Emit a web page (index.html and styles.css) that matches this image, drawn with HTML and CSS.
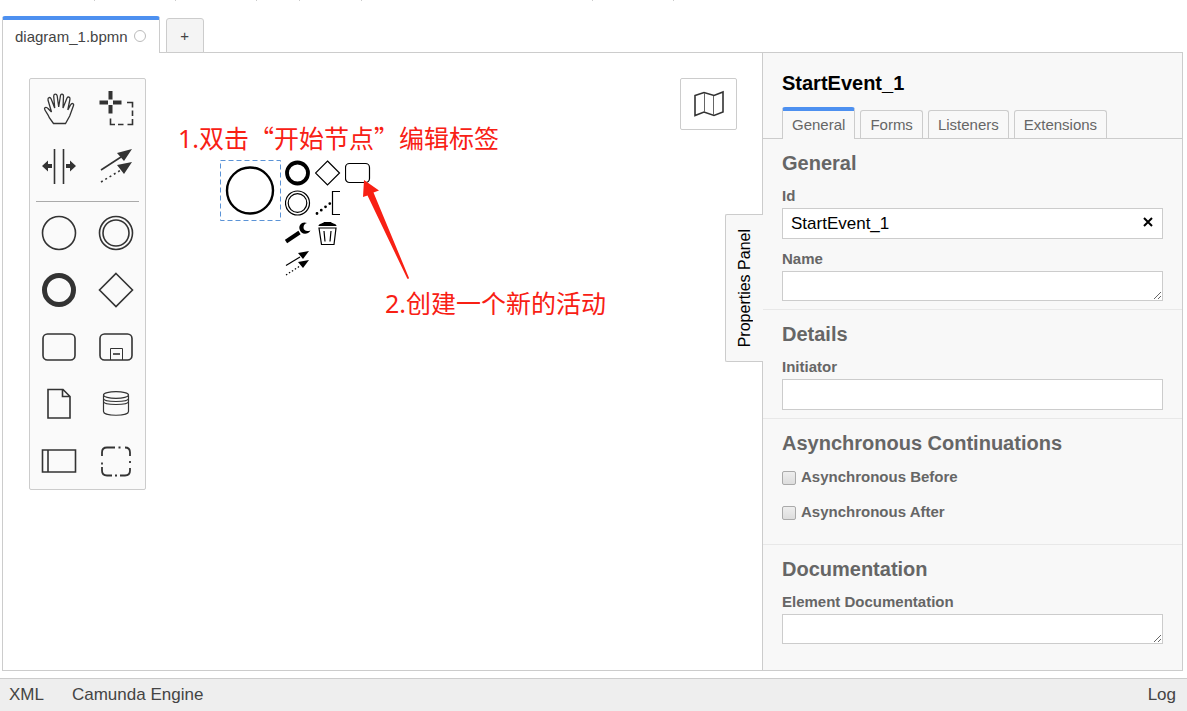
FILE: index.html
```html
<!DOCTYPE html>
<html lang="en">
<head>
<meta charset="utf-8">
<title>diagram_1.bpmn</title>
<link rel="stylesheet" href="styles.css">
</head>
<body>
<div class="toolbar"><span class="s1"></span><span class="s2"></span><span class="s2"></span><span class="s3"></span><span class="s4"></span><span class="s5"></span><span class="s2"></span></div>
<nav class="file-tabs">
  <button class="file-tab active">diagram_1.bpmn <span class="dot"></span></button>
  <button class="file-tab add" aria-label="New tab">+</button>
</nav>
<main class="editor">
  <section class="canvas">
    <div class="palette">
      <div class="tools">
        <button aria-label="Hand tool"><svg width="38" height="38" viewBox="0 0 38 38"><path stroke-width="1.300" d="M13.500 34.500L9.500 29C8 25 4.500 21.500 4.500 19.500C4.700 17.800 7 18 8 19.500L11.500 23L8 11C7.700 8.300 10 7.500 11.200 10L14.700 19L13.700 7C14 4.500 16.700 4.500 17.200 7L18.700 18L20.500 6.500C21 4.300 23.500 4.800 23.500 7L23 19L27 9C28.200 7 30.500 8.300 29.900 10.500L27.800 21L30.500 16C32 13.500 34.200 14.500 33.500 16.500L29.700 27L25.500 34.500Z"/></svg></button>
        <button aria-label="Lasso tool"><svg width="38" height="38" viewBox="0 0 38 38"><path stroke-width="4" d="M13.500 2v8.500M13.500 16v8.500M2.500 13.500h8.500M16 13.500h8.500"/><path d="M30 13.500h5.500v5M35.500 21.500v5.500M35.500 30v5.500h-5M26.500 35.500h-5.500M18 35.500h-4.500v-6"/></svg></button>
        <button aria-label="Space tool"><svg width="38" height="38" viewBox="0 0 38 38"><path d="M14.500 2v35M23.500 2v35"/><path class="solid" d="M2 19l6-5.500v3.500h4v4H8v3.500zM36 19l-6-5.500v3.500h-4v4h4v3.500z"/></svg></button>
        <button aria-label="Connect tool"><svg width="38" height="38" viewBox="0 0 38 38"><path d="M4 23L24 10"/><path stroke-dasharray="2 3" d="M4 35L24 23"/><path class="solid" d="M35 2l-8 12-7-8zM35 15l-8 12-7-9z"/></svg></button>
      </div>
      <hr>
      <div class="shapes">
        <button aria-label="Start event"><svg width="38" height="38" viewBox="0 0 38 38"><circle cx="19" cy="19" r="16.500"/></svg></button>
        <button aria-label="Intermediate event"><svg width="38" height="38" viewBox="0 0 38 38"><circle cx="19" cy="19" r="16.500"/><circle cx="19" cy="19" r="13"/></svg></button>
        <button aria-label="End event"><svg width="38" height="38" viewBox="0 0 38 38"><circle cx="19" cy="19" r="14.500" stroke-width="5"/></svg></button>
        <button aria-label="Gateway"><svg width="38" height="38" viewBox="0 0 38 38"><path d="M19 2.500L35.500 19L19 35.500L2.500 19Z"/></svg></button>
        <button aria-label="Task"><svg width="38" height="38" viewBox="0 0 38 38"><rect x="3" y="6" width="32" height="26" rx="4.500"/></svg></button>
        <button aria-label="Sub process"><svg width="38" height="38" viewBox="0 0 38 38"><rect x="3" y="6" width="32" height="26" rx="4.500"/><path stroke-width="1" d="M13.500 32V20.500h12V32"/><path d="M16 26h7"/></svg></button>
        <button aria-label="Data object"><svg width="38" height="38" viewBox="0 0 38 38"><path d="M8 4.500h15l7 7v21.500H8zM22.500 4.500v7h7.500"/></svg></button>
        <button aria-label="Data store"><svg width="38" height="38" viewBox="0 0 38 38"><path stroke-width="1.200" d="M6.500 10.500v16c0 5 25 5 25 0v-16M6.500 13.500c0 4 25 4 25 0M6.500 16.500c0 4 25 4 25 0"/><ellipse stroke-width="1.200" cx="19" cy="10" rx="12.500" ry="3.300"/></svg></button>
        <button aria-label="Participant"><svg width="38" height="38" viewBox="0 0 38 38"><path d="M2.500 8h33v22h-33zM8 8v22"/></svg></button>
        <button aria-label="Group"><svg width="38" height="38" viewBox="0 0 38 38"><path stroke-width="1.800" d="M5 14V10.500q0-5 5-5h8M28 5.500q5 0 5 5V14M33 26v2.500q0 5-5 5h-5M15 33.500h-5q-5 0-5-5V25M21.500 5.500h2M33 19v2M18 33.500h2M5 20.500v2"/></svg></button>
      </div>
    </div>

    <svg class="start-event" width="62" height="62" viewBox="0 0 62 62"><rect x="0.500" y="0.500" width="60" height="60"/><circle cx="30" cy="30.500" r="23"/></svg>

    <div class="context-pad">
      <button aria-label="Append end event"><svg width="26" height="26" viewBox="0 0 26 26"><circle cx="12.500" cy="13" r="10.500" stroke-width="3.800"/></svg></button>
      <button aria-label="Append gateway"><svg width="26" height="26" viewBox="0 0 26 26"><path d="M12.500 1L24.500 13L12.500 25L.5 13Z"/></svg></button>
      <button aria-label="Append task"><svg width="26" height="26" viewBox="0 0 26 26"><rect x=".5" y="3.500" width="24" height="19" rx="4"/></svg></button>
      <button aria-label="Append intermediate event"><svg width="26" height="26" viewBox="0 0 26 26"><circle cx="12.500" cy="13" r="12"/><circle cx="12.500" cy="13" r="9.300"/></svg></button>
      <button aria-label="Append text annotation"><svg width="26" height="26" viewBox="0 0 26 26"><path d="M25 1.500h-7.500v23h7.500"/><path d="M2 23.500L15.500 13" stroke-width="2.800" stroke-linecap="round" stroke-dasharray="0 5.400"/></svg></button>
      <span></span>
      <button aria-label="Change type"><svg width="26" height="26" viewBox="0 0 26 26"><path stroke-width="4" d="M1 21.500L14.500 12.500"/><path class="solid" d="M22 3C17.500 1 13.500 4.500 14.500 9C15.500 14.500 22.500 15.500 25.500 10.500C21.500 12 18.500 10.500 18.500 7.500C18.500 5 20 3.500 22 3Z"/></svg></button>
      <button aria-label="Remove"><svg width="26" height="26" viewBox="0 0 26 26"><path class="solid" d="M3.500 6c0-2.500 4-2 5.500-4h7c1.500 2 5.500 1.500 5.500 4z"/><path d="M4 8h17l-2 16.500H6.500zM9 11l1 10.500M16 11l-1 10.500"/></svg></button>
      <span></span>
      <button aria-label="Connect"><svg width="26" height="26" viewBox="0 0 26 26"><path d="M1 15.500L15 7"/><path stroke-dasharray="1.500 2" d="M1 25L15 16"/><path class="solid" d="M24 1l-6 8-5-6zM24 10l-6 8-5-6z"/></svg></button>
    </div>

    <p class="note note-one" lang="zh-CN"><span class="num">1.</span>双击“开始节点”编辑标签</p>
    <p class="note note-two" lang="zh-CN"><span class="num">2.</span>创建一个新的活动</p>
    <svg class="arrow" width="50" height="102" viewBox="0 0 50 102"><path d="M1 1L16 11.500L10.500 13.500L46 99Q45 101 44 99L4.500 16.500L0 18Z"/></svg>

    <button class="minimap" aria-label="Open minimap"><svg width="32" height="28" viewBox="0 0 32 28"><path d="M2 5.500L11 2.500L21 5.500L30 2V22L21 25.500L11 22L2 25.500Z"/><path class="fold" d="M11.500 3v19M20.500 6v19"/></svg></button>
  </section>

  <aside class="panel">
    <button class="panel-toggle"><span>Properties Panel</span></button>
    <h1>StartEvent_1</h1>
    <nav class="tabs">
      <a href="#general" class="active">General</a>
      <a href="#forms">Forms</a>
      <a href="#listeners">Listeners</a>
      <a href="#extensions">Extensions</a>
    </nav>
    <section class="group" id="general">
      <h2>General</h2>
      <div class="field"><label for="id">Id</label><div class="clearable"><input id="id" type="text" value="StartEvent_1"><button class="clear" aria-label="Clear"><svg width="10" height="10" viewBox="0 0 10 10"><path d="M1 1L9 9M9 1L1 9"/></svg></button></div></div>
      <div class="field"><label for="name">Name</label><textarea id="name"></textarea></div>
    </section>
    <section class="group">
      <h2>Details</h2>
      <div class="field"><label for="initiator">Initiator</label><input id="initiator" type="text"></div>
    </section>
    <section class="group checks">
      <h2>Asynchronous Continuations</h2>
      <div class="check"><input id="before" type="checkbox"><label for="before">Asynchronous Before</label></div>
      <div class="check"><input id="after" type="checkbox"><label for="after">Asynchronous After</label></div>
    </section>
    <section class="group">
      <h2>Documentation</h2>
      <div class="field"><label for="doc">Element Documentation</label><textarea id="doc"></textarea></div>
    </section>
  </aside>
</main>
<footer class="status">
  <button>XML</button>
  <button>Camunda Engine</button>
  <button class="log">Log</button>
</footer>
</body>
</html>
```
FILE: styles.css
```css
* { box-sizing: border-box; }
body {
  margin: 0;
  min-height: 100vh;
  display: flex;
  flex-direction: column;
  background: #fff;
  color: #444;
  font-family: "Liberation Sans", Arial, sans-serif;
}
button, input, textarea { font-family: inherit; margin: 0; }
button { border: 0; padding: 0; background: none; color: inherit; }
h1, h2, p { margin: 0; }

.toolbar { display: flex; height: 1px; margin-bottom: 1px; padding-left: 14px; }
.toolbar span { border-right: 1px solid #ccc; }
.s1, .s2 { width: 81px; }
.s3 { width: 43px; }
.s4 { width: 62px; }
.s5 { width: 231px; }

.file-tabs {
  display: flex;
  align-items: flex-end;
  gap: 6px;
  height: 51px;
  padding-left: 2px;
  margin-bottom: -1px;
  z-index: 1;
}
.file-tab {
  display: flex;
  align-items: center;
  justify-content: center;
  gap: 6px;
  height: 37px;
  padding: 0 13px 1px 12px;
  border: 1px solid #ccc;
  border-top: 4px solid #4d90f0;
  border-bottom: 0;
  border-radius: 3px 3px 0 0;
  background: #fff;
  font-size: 15px;
}
.dot { width: 12px; height: 12px; border: 1px solid #bbb; border-radius: 50%; }
.file-tab.add {
  width: 38px;
  height: 35px;
  padding: 0;
  border: 1px solid #ccc;
  background: #f4f4f4;
}

.editor { flex: 1; display: flex; margin: 0 4px 7px 2px; border: 1px solid #ccc; }
.canvas { flex: 1; position: relative; min-width: 0; }

.palette {
  position: absolute;
  left: 26px;
  top: 25px;
  width: 117px;
  border: 1px solid #ccc;
  border-radius: 2px;
  background: #fafafa;
}
.tools, .shapes { display: grid; grid-template-columns: 1fr 1fr; }
.tools { grid-auto-rows: 58px; }
.shapes { grid-auto-rows: 57px; }
.palette hr { margin: 6px 6px 2px; border: 0; border-top: 1px solid #aaa; }
.palette button, .context-pad button { display: grid; place-items: center; }
svg { display: block; fill: none; stroke: #333; stroke-width: 1.6; }
.solid { fill: #333; stroke: none; }

.start-event { position: absolute; left: 217px; top: 107px; stroke: #000; }
.start-event rect { stroke: #5b93d6; stroke-width: 1; stroke-dasharray: 5 3; }
.start-event circle { stroke-width: 2.4; }
.context-pad {
  position: absolute;
  left: 282px;
  top: 107px;
  display: grid;
  grid-template-columns: repeat(3, 26px);
  grid-auto-rows: 26px;
  gap: 4px;
}
.context-pad svg { stroke: #000; stroke-width: 1.2; }
.context-pad .solid { fill: #000; }

.note {
  position: absolute;
  color: #f82014;
  font: 25px/36px "Noto Sans CJK SC", sans-serif;
  white-space: nowrap;
}
.num { font-family: "Noto Sans", sans-serif; }
.note-one { left: 175px; top: 66px; }
.note-two { left: 382px; top: 231px; }
.arrow { position: absolute; left: 360px; top: 126px; fill: #f82014; stroke: none; }

.minimap {
  position: absolute;
  right: 25px;
  top: 25px;
  width: 57px;
  height: 52px;
  display: grid;
  place-items: center;
  border: 1px solid #ccc;
  border-radius: 2px;
  background: #fff;
}
.minimap .fold { stroke: #666; stroke-width: 1; }

.panel {
  position: relative;
  width: 420px;
  border-left: 1px solid #ccc;
  background: #f8f8f8;
  color: #666;
}
.panel-toggle {
  position: absolute;
  left: -38px;
  top: 161px;
  width: 38px;
  height: 148px;
  display: grid;
  place-items: center;
  border: 1px solid #ccc;
  border-right: 0;
  border-radius: 2px 0 0 2px;
  background: #f8f8f8;
  color: #000;
  font-size: 16px;
}
.panel-toggle span { writing-mode: vertical-rl; transform: rotate(180deg); white-space: nowrap; }
.panel h1 { padding: 18px 19px 0; color: #000; font-size: 20px; line-height: 24px; }
.tabs {
  display: flex;
  align-items: flex-end;
  gap: 5px;
  height: 44px;
  padding: 0 19px;
  border-bottom: 1px solid #ccc;
}
.tabs a {
  height: 28px;
  padding: 0 9px;
  border: 1px solid #ccc;
  border-bottom: 0;
  border-radius: 3px 3px 0 0;
  color: #666;
  font-size: 15px;
  line-height: 28px;
  text-decoration: none;
}
.tabs .active {
  height: 32px;
  margin-bottom: -1px;
  border-top: 4px solid #4d90f0;
  background: #f8f8f8;
}
.group { padding: 12px 19px 8px; border-bottom: 1px solid #e8e8e8; }
.group:last-child { border-bottom: 0; }
.group h2 { margin-bottom: 11px; font-size: 20px; line-height: 24px; }
.group label { display: block; font-size: 15px; font-weight: bold; line-height: 20px; }
.field + .field { margin-top: 10px; }
.field label { margin-bottom: 2px; }
.field input, .field textarea {
  display: block;
  width: 100%;
  height: 31px;
  padding: 0 8px;
  border: 1px solid #ccc;
  border-radius: 0;
  background: #fff;
  color: #000;
  font-size: 17px;
}
.field textarea { height: 30px; resize: vertical; overflow: hidden; }
.clearable { position: relative; }
.clear { position: absolute; right: 10px; top: 9px; }
.clear svg { stroke: #000; stroke-width: 2; }
.checks h2 { margin-bottom: 12px; }
.checks { padding-bottom: 22px; }
.check { display: flex; align-items: center; gap: 5px; }
.check + .check { margin-top: 15px; }
.check input {
  appearance: none;
  width: 14px;
  height: 14px;
  margin-top: 2px;
  border: 1px solid #aaa;
  border-radius: 2px;
  background: linear-gradient(#eee, #ddd);
}

.status {
  display: flex;
  align-items: center;
  gap: 28px;
  height: 33px;
  padding: 0 11px 0 9px;
  border-top: 1px solid #ccc;
  background: #eee;
}
.status button { font-size: 17px; }
.status .log { margin-left: auto; }
```
